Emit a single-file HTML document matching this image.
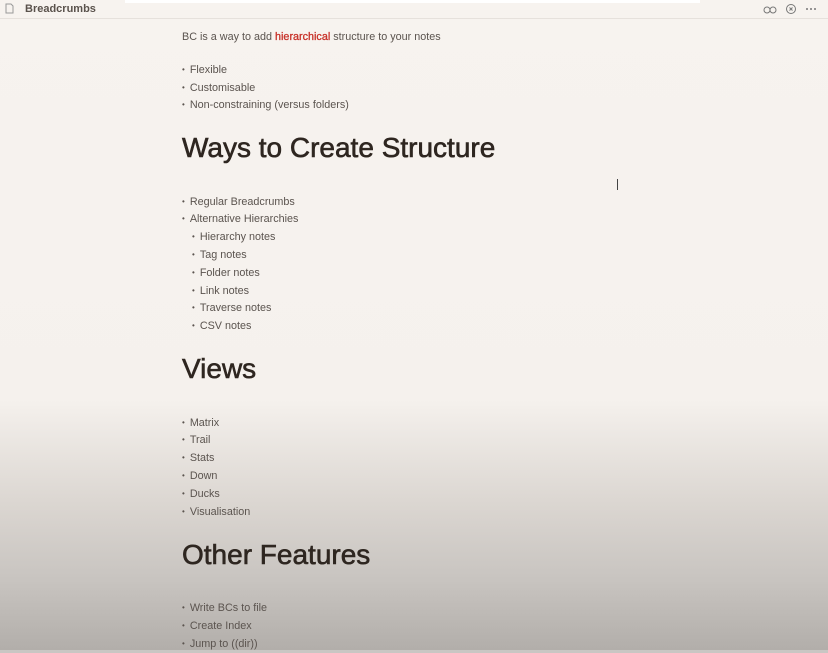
<!DOCTYPE html>
<html><head><meta charset="utf-8"><style>
html,body{margin:0;padding:0;}
body{width:828px;height:653px;overflow:hidden;position:relative;font-family:"Liberation Sans",sans-serif;
background:linear-gradient(to bottom,#f7f3ef 0px,#f5f1ed 400px,#dcd7d2 500px,#c8c4c0 580px,#b2aeaa 650px);}
.hdr{position:absolute;left:0;top:0;width:828px;height:18px;border-bottom:1px solid #e6e1dc;background:#f7f3ef;}
.hdr .t{position:absolute;left:25px;top:3px;font-size:11px;font-weight:bold;color:#5a524c;}
.l{position:absolute;font-size:10.8px;color:#5b544f;white-space:nowrap;line-height:12px;margin-top:1px;}
.b::before{content:"•";margin-right:5px;font-size:8px;position:relative;top:-1px;}
h1{position:absolute;margin:0;font-size:28px;font-weight:normal;-webkit-text-stroke:0.6px #2e2620;color:#2e2620;left:182px;line-height:30px;white-space:nowrap;}
.red{color:#c8322a;-webkit-text-stroke:0.3px #c8322a;}
</style></head><body>
<div class="hdr">
<svg style="position:absolute;left:5px;top:3px" width="9" height="11"><path d="M1 1h5l2 2v7H1z" fill="none" stroke="#999" stroke-width="1"/></svg>
<span class="t">Breadcrumbs</span>
<div style="position:absolute;left:125px;top:0;width:575px;height:3px;background:#fff"></div>
<svg style="position:absolute;left:762px;top:3px" width="60" height="12"><circle cx="5" cy="7" r="3" fill="none" stroke="#777"/><circle cx="11" cy="7" r="3" fill="none" stroke="#777"/><circle cx="29" cy="6" r="4.5" fill="none" stroke="#777"/><path d="M27.5 4.5l3 3M30.5 4.5l-3 3" stroke="#777"/><circle cx="45" cy="6" r="1" fill="#777"/><circle cx="49" cy="6" r="1" fill="#777"/><circle cx="53" cy="6" r="1" fill="#777"/></svg>
</div>
<div class="l" style="left:182px;top:30px">BC is a way to add <span class="red">hierarchical</span> structure to your notes</div>
<div class="l b" style="left:182px;top:63px">Flexible</div>
<div class="l b" style="left:182px;top:81px">Customisable</div>
<div class="l b" style="left:182px;top:98px">Non-constraining (versus folders)</div>
<h1 style="top:133px">Ways to Create Structure</h1>
<div class="l b" style="left:182px;top:195px">Regular Breadcrumbs</div>
<div class="l b" style="left:182px;top:212px">Alternative Hierarchies</div>
<div class="l b" style="left:192px;top:230px">Hierarchy notes</div>
<div class="l b" style="left:192px;top:248px">Tag notes</div>
<div class="l b" style="left:192px;top:266px">Folder notes</div>
<div class="l b" style="left:192px;top:284px">Link notes</div>
<div class="l b" style="left:192px;top:301px">Traverse notes</div>
<div class="l b" style="left:192px;top:319px">CSV notes</div>
<h1 style="top:354px">Views</h1>
<div class="l b" style="left:182px;top:416px">Matrix</div>
<div class="l b" style="left:182px;top:433px">Trail</div>
<div class="l b" style="left:182px;top:451px">Stats</div>
<div class="l b" style="left:182px;top:469px">Down</div>
<div class="l b" style="left:182px;top:487px">Ducks</div>
<div class="l b" style="left:182px;top:505px">Visualisation</div>
<h1 style="top:540px">Other Features</h1>
<div class="l b" style="left:182px;top:601px">Write BCs to file</div>
<div class="l b" style="left:182px;top:619px">Create Index</div>
<div class="l b" style="left:182px;top:637px">Jump to ((dir))</div>
<div style="position:absolute;left:617px;top:179px;width:1px;height:11px;background:#444"></div>
<div style="position:absolute;left:0;top:650px;width:828px;height:3px;background:#c9c6c3"></div>
</body></html>
